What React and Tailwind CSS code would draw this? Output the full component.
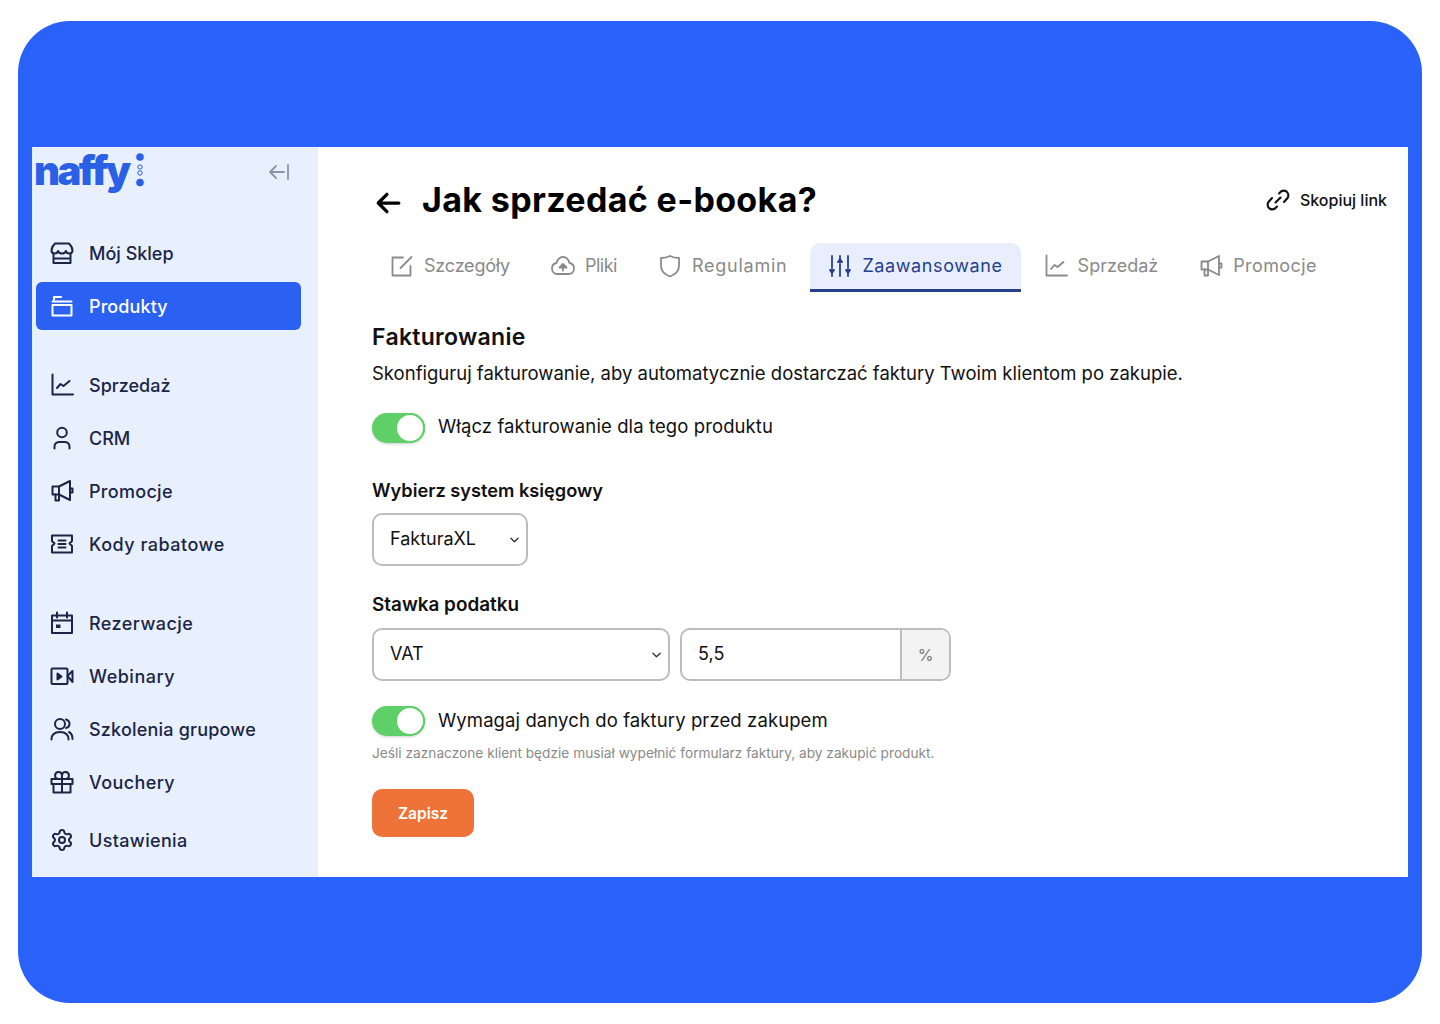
import React from "react";
import { Settings } from "lucide-react";

const S = ({ children, className = "w-6 h-6", sw = 2 }) => (
  <svg viewBox="0 0 24 24" fill="none" stroke="currentColor" strokeWidth={sw} strokeLinecap="round" strokeLinejoin="round" className={`shrink-0 ${className}`}>
    {children}
  </svg>
);

const Store = (p) => <S {...p}><path d="M5 2.500h14c1.500 1.500 3.500 4.500 3.500 7 0 2-1.500 3-3.200 3-1.500 0-3-1-3.300-2.500-.7 1.500-2.200 2.500-4 2.500s-3.300-1-4-2.500C7.700 11.500 6.200 12.500 4.700 12.500c-1.700 0-3.200-1-3.200-3 0-2.500 2-5.500 3.500-7z" /><path d="M3.500 12.500V22h17v-9.500M3.500 17.500h17" /></S>;
const Folder = (p) => <S {...p}><path d="M4 5.500V3h7M2.500 7.500h19M2.500 11h19v10.500h-19z" /></S>;
const Chart = (p) => <S {...p}><path d="M2.500 1.500V21.500H23" /><path d="M7 15l3.500-4 3 2 6-5" /></S>;
const User = (p) => <S {...p}><circle cx="12" cy="6.500" r="4.800" /><path d="M4.500 22.500v-2c0-3 2.500-4.500 5-4.500h5c2.500 0 5 1.500 5 4.500v2" /></S>;
const Mega = (p) => <S {...p}><path d="M20 2 9 7.500H2.500v8H9L20 21z" /><path d="M20 9.500h2.500v4H20M5.500 15.500V21.500H9v-6M9 7.500v8" /></S>;
const Ticket = (p) => <S {...p}><path d="M2 3.500h20v5.500l-2.500 2.500L22 14v6.500H2V14l2.500-2.500L2 9z" /><path d="M8.500 8.500h7M8.500 12h7M8.500 15.500h7" /></S>;
const Cal = (p) => <S {...p}><rect x="2" y="4.500" width="20" height="17.500" /><path d="M2 9.500h20M7 1.500v5M17 1.500v5" /><rect x="6" y="13.500" width="4.500" height="3.500" fill="currentColor" stroke="none" /></S>;
const Video = (p) => <S {...p}><rect x="1.500" y="4.500" width="16" height="15.500" rx="1" /><path d="m17.500 12 5-5v11z" /><path d="m7.500 9.500 4 3-4 3z" fill="currentColor" /></S>;
const Users = (p) => <S {...p}><circle cx="10" cy="7" r="5" /><path d="M1.500 22.500c0-4.500 3-7.500 8.500-7.500s8.500 3 8.500 7.500M16 2.500c2 .5 3.500 2.200 3.500 4.500S18 10.500 16 11M19 15c2 1 3.500 3.500 3.500 7" /></S>;
const Gift = (p) => <S {...p}><path d="M1.500 9h21v5h-21zM3.500 14v8.500h17V14M12 9v13.500" /><path d="M12 9H8a3.500 3.500 0 1 1 4-4zM12 9h4a3.500 3.500 0 1 0-4-4z" /></S>;
const Edit = (p) => <S {...p}><path d="M20.500 12v9.500h-18v-18H13" /><path d="m10.500 14 11-11" /></S>;
const Cloud = (p) => <S {...p}><path d="M6.500 20C3 20 1 17.500 1 14.500S3 9.500 5.500 9C6.500 5.500 9 3 12 3s5.500 2.500 6.500 6c2.500.5 4.500 2.500 4.500 5.500S21 20 17.500 20z" /><path d="M12 16.500V11" /><path d="m8.500 13.500 3.500-3.500 3.500 3.500z" fill="currentColor" /></S>;
const Shield = (p) => <S {...p}><path d="M12 2c-3 1.500-5 2-9 2v8c0 5 4 8.500 9 10.500 5-2 9-5.500 9-10.500V4c-4 0-6-.5-9-2z" /></S>;
const Sliders = (p) => <S {...p}><path d="M4 2v12M4 20v2M12 2v2M12 10v12M20 2v12M20 20v2" /><path d="M2 16h4l-2 3zM10 8h4l-2-3zM18 16h4l-2 3z" fill="currentColor" /></S>;
const Link2 = (p) => <S {...p}><path d="M13 5.500 15 3.500a5 5 0 0 1 5.500 0c2 1.500 2.500 4.500 1 6.500L18 14" /><path d="M11 18.500 9 20.500a5 5 0 0 1-5.500 0C1.500 19 1 16 2.500 14L6 10" /><path d="m9.500 14.500 5-5" /></S>;

const NavItem = ({ icon: I, label, active, track = "" }) => (
  <div className={`flex items-center h-[48px] pl-[14px] rounded-[6px] text-[18px] font-medium ${track} ${active ? "bg-[#2a61f2] text-white" : "text-[#1b2547]"}`}>
    <I className="w-6 h-6" sw={2} />
    <span className="ml-[15px]">{label}</span>
  </div>
);

const Tab = ({ icon: I, label, active, track = "" }) => (
  <div className={`flex items-center h-[49px] px-[18px] border-b-[3px] text-[18px] ${active ? "bg-[#e8eefb] text-[#25408f] border-[#25408f] rounded-t-[10px]" : "text-[#8a8a8a] border-transparent"}`}>
    <I className="w-6 h-6" sw={1.8} />
    <span className={`ml-[10px] -mt-[2px] ${track}`}>{label}</span>
  </div>
);

const Toggle = () => (
  <div className="w-[53px] h-[30px] rounded-full bg-[#5fd068] relative shrink-0 shadow-[0_1px_3px_rgba(0,0,0,0.2)]">
    <div className="absolute right-0 top-0 w-[30px] h-[30px] rounded-full bg-white border-2 border-[#5fd068]" />
  </div>
);

const Chevron = () => (
  <svg viewBox="0 0 10 6" className="w-[9px] h-[6px]" fill="none" stroke="#333" strokeWidth="1.500" strokeLinecap="round" strokeLinejoin="round">
    <path d="M1 1l4 4 4-4" />
  </svg>
);

export default function App() {
  return (
    <div className="w-[1440px] h-[1024px] bg-white pt-[21px] pl-[18px] [font-family:Inter,sans-serif] overflow-hidden">
      <div className="w-[1404px] h-[982px] rounded-[52px] bg-[#2a61f8] flex items-center pl-[14px]">
        <div className="w-[1376px] h-[730px] flex overflow-hidden bg-white">
          <aside className="w-[286px] shrink-0 bg-[#e9f0fd] pl-[4px] pr-[17px] flex flex-col">
            <div className="h-[48px] flex items-center justify-between pr-[11px]">
              <div className="flex items-center">
                <span className="text-[40px] leading-[48px] font-black text-[#2a5fe6] tracking-[-2.5px] -ml-[2px] pr-[3px]">naffy</span>
                <svg viewBox="0 0 10 34" className="w-[10px] h-[34px] ml-[3px] -mt-[3px]">
                  <circle cx="5" cy="4" r="3.800" fill="#2a5fe6" />
                  <circle cx="5" cy="14" r="2.200" fill="none" stroke="#2a5fe6" strokeWidth="1" />
                  <circle cx="5" cy="20" r="2.200" fill="none" stroke="#2a5fe6" strokeWidth="1" />
                  <circle cx="5" cy="29.500" r="3.800" fill="#2a5fe6" />
                </svg>
              </div>
              <svg viewBox="0 0 22 18" className="w-[22px] h-[18px] mt-[2px]" fill="none" stroke="#8d93a6" strokeWidth="1.800" strokeLinecap="round" strokeLinejoin="round">
                <path d="M16 9H2M8 3 2 9l6 6M20 2v14" />
              </svg>
            </div>
            <nav className="mt-[34px] flex flex-col gap-[5px]">
              <NavItem icon={Store} label="Mój Sklep" />
              <NavItem icon={Folder} label="Produkty" active track="tracking-[0.1px]" />
            </nav>
            <nav className="mt-[31px] flex flex-col gap-[5px]">
              <NavItem icon={Chart} label="Sprzedaż" />
              <NavItem icon={User} label="CRM" />
              <NavItem icon={Mega} label="Promocje" track="tracking-[0.3px]" />
              <NavItem icon={Ticket} label="Kody rabatowe" track="tracking-[0.5px]" />
            </nav>
            <nav className="mt-[31px] flex flex-col gap-[5px]">
              <NavItem icon={Cal} label="Rezerwacje" track="tracking-[0.45px]" />
              <NavItem icon={Video} label="Webinary" track="tracking-[0.5px]" />
              <NavItem icon={Users} label="Szkolenia grupowe" track="tracking-[0.2px]" />
              <NavItem icon={Gift} label="Vouchery" track="tracking-[0.4px]" />
            </nav>
            <div className="mt-[10px]">
              <NavItem icon={Settings} label="Ustawienia" track="tracking-[0.35px]" />
            </div>
          </aside>
          <main className="flex-1 pl-[54px] pr-[21px]">
            <header className="h-[96px] pt-[10px] flex items-center justify-between">
              <div className="flex items-center text-black">
                <svg viewBox="0 0 24 24" className="w-[26px] h-[26px] ml-[3px] mt-[6px]" fill="none" stroke="currentColor" strokeWidth="3" strokeLinecap="round" strokeLinejoin="round">
                  <path d="M22 12H3M11 4l-8 8 8 8" />
                </svg>
                <h1 className="ml-[21px] text-[34px] leading-none font-bold tracking-[0.35px]">Jak sprzedać e-booka?</h1>
              </div>
              <div className="flex items-center text-[16px] font-medium text-[#111]">
                <Link2 className="w-6 h-6" sw={2.1} />
                <span className="ml-[10px]">Skopiuj link</span>
              </div>
            </header>
            <div className="flex gap-[5px]">
              <Tab icon={Edit} label="Szczegóły" track="tracking-[-0.2px]" />
              <Tab icon={Cloud} label="Pliki" track="tracking-[-0.5px]" />
              <Tab icon={Shield} label="Regulamin" track="tracking-[0.75px]" />
              <Tab icon={Sliders} label="Zaawansowane" active track="tracking-[0.6px]" />
              <Tab icon={Chart} label="Sprzedaż" />
              <Tab icon={Mega} label="Promocje" track="tracking-[0.4px]" />
            </div>
            <section className="mt-[30px]">
              <h2 className="text-[23px] leading-[30px] font-semibold text-[#111] tracking-[0.3px]">Fakturowanie</h2>
              <p className="mt-[7px] text-[18.500px] leading-[28px] text-[#111]">
                Skonfiguruj fakturowanie, aby automatycznie dostarczać faktury Twoim klientom po zakupie.
              </p>
              <div className="mt-[26px] flex items-center gap-[13px]">
                <Toggle />
                <span className="text-[18.500px] leading-[28px] tracking-[0.1px] text-[#111] -mt-[4px]">Włącz fakturowanie dla tego produktu</span>
              </div>
              <h3 className="mt-[33px] text-[18.200px] leading-[28px] font-semibold text-[#111]">Wybierz system księgowy</h3>
              <div className="mt-[9px] w-[156px] h-[53px] rounded-[10px] border-2 border-[#bdbdbd] flex items-center justify-between pl-[16px] pr-[7px] text-[18px] text-[#111]">
                <span className="-mt-[2px]">FakturaXL</span>
                <Chevron />
              </div>
              <h3 className="mt-[25px] text-[18.900px] leading-[28px] font-semibold text-[#111]">Stawka podatku</h3>
              <div className="mt-[9px] flex gap-[10px] text-[18px] text-[#111]">
                <div className="w-[298px] h-[53px] rounded-[10px] border-2 border-[#bdbdbd] flex items-center justify-between pl-[16px] pr-[7px]">
                  <span className="-mt-[2px]">VAT</span>
                  <Chevron />
                </div>
                <div className="w-[271px] h-[53px] rounded-[10px] border-2 border-[#bdbdbd] flex items-stretch overflow-hidden">
                  <span className="flex-1 flex items-center pl-[16px] pb-[2px]">5,5</span>
                  <span className="w-[49px] bg-[#f3f3f3] border-l-2 border-[#bdbdbd] flex items-center justify-center text-[#777] text-[16px]">%</span>
                </div>
              </div>
              <div className="mt-[25px] flex items-center gap-[13px]">
                <Toggle />
                <span className="text-[18.500px] leading-[28px] tracking-[0.1px] text-[#111] -mt-[2px]">Wymagaj danych do faktury przed zakupem</span>
              </div>
              <p className="mt-[7px] text-[13.700px] leading-[20px] text-[#8a8a8a]">
                Jeśli zaznaczone klient będzie musiał wypełnić formularz faktury, aby zakupić produkt.
              </p>
              <button className="mt-[26px] w-[102px] h-[48px] pt-[1px] rounded-[10px] bg-[#ee7339] text-white text-[15.500px] font-semibold">Zapisz</button>
            </section>
          </main>
        </div>
      </div>
    </div>
  );
}
